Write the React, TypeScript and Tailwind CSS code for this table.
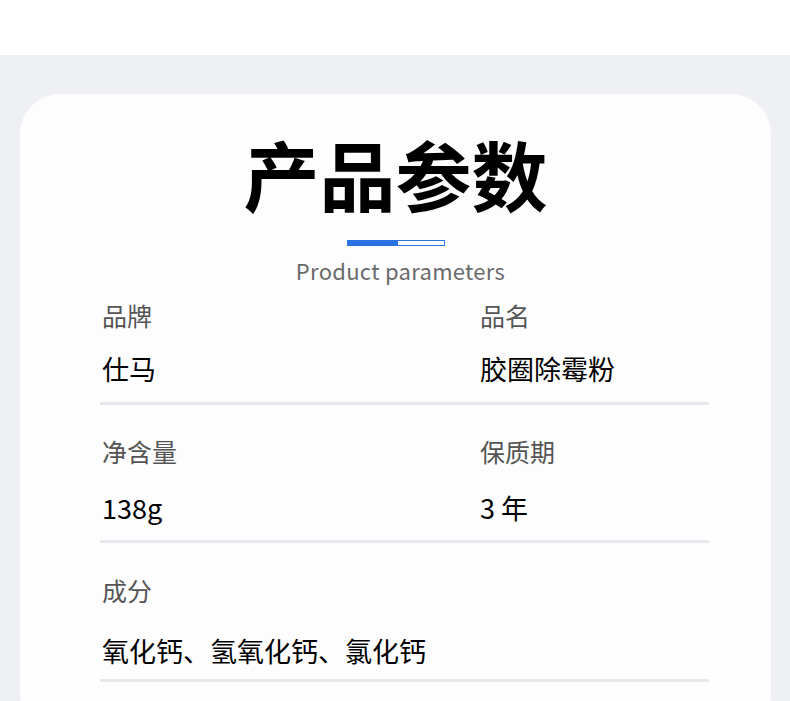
const font = { fontFamily: '"Noto Sans CJK SC", "Noto Sans", sans-serif' };

const rows = [
  { a: ['品牌', '仕马'], b: ['品名', '胶圈除霉粉'], pt: 'pt-[20px]', gap: 'mt-[30px]', pb: 'pb-[21px]' },
  { a: ['净含量', '138g'], b: ['保质期', '3 年'], pt: 'pt-[34px]', gap: 'mt-[33px]', pb: 'pb-[20px]' },
  { a: ['成分', '氧化钙、氢氧化钙、氯化钙'], b: null, pt: 'pt-[35px]', gap: 'mt-[37px]', pb: 'pb-[16px]' },
];

export default function App() {
  return (
    <div className="w-[790px] h-[701px] overflow-hidden bg-white" style={font}>
      <div className="h-[55px] bg-white" />
      <div className="bg-[#eff0f4] h-[646px] pt-[39px] pl-[20px] pr-[19px]">
        <div className="bg-[#fdfdfe] rounded-[40px] h-[640px]">
          {/* 标题 */}
          <div className="pt-[41px] flex flex-col items-center">
            <h1 className="text-[76px] leading-[76px] font-bold text-black">产品参数</h1>
            <div className="mt-[29px] flex w-[98px] h-[6px]">
              <div className="w-[50px] bg-[#2a72e0]" />
              <div className="flex-1 border border-[#2a72e0] bg-white" />
            </div>
            <p className="mt-[11px] ml-[10px] text-[22px] leading-[26px] text-[#6a6a6a] tracking-[0.3px]">Product parameters</p>
          </div>

          {/* 参数列表 */}
          <div className="ml-[80px] w-[609px]">
            {rows.map((r, i) => (
              <div key={i} className={`${r.pt} ${r.pb} border-b-[3px] border-[#e7e8ee] grid grid-cols-[378px_1fr] pl-[2px]`}>
                <div>
                  <div className="text-[25px] leading-[24px] text-[#555555]">{r.a[0]}</div>
                  <div className={`${r.gap} text-[27px] leading-[24px] text-black`}>{r.a[1]}</div>
                </div>
                {r.b && (
                  <div>
                    <div className="text-[25px] leading-[24px] text-[#555555]">{r.b[0]}</div>
                    <div className={`${r.gap} text-[27px] leading-[24px] text-black`}>{r.b[1]}</div>
                  </div>
                )}
              </div>
            ))}
          </div>
        </div>
      </div>
    </div>
  );
}
